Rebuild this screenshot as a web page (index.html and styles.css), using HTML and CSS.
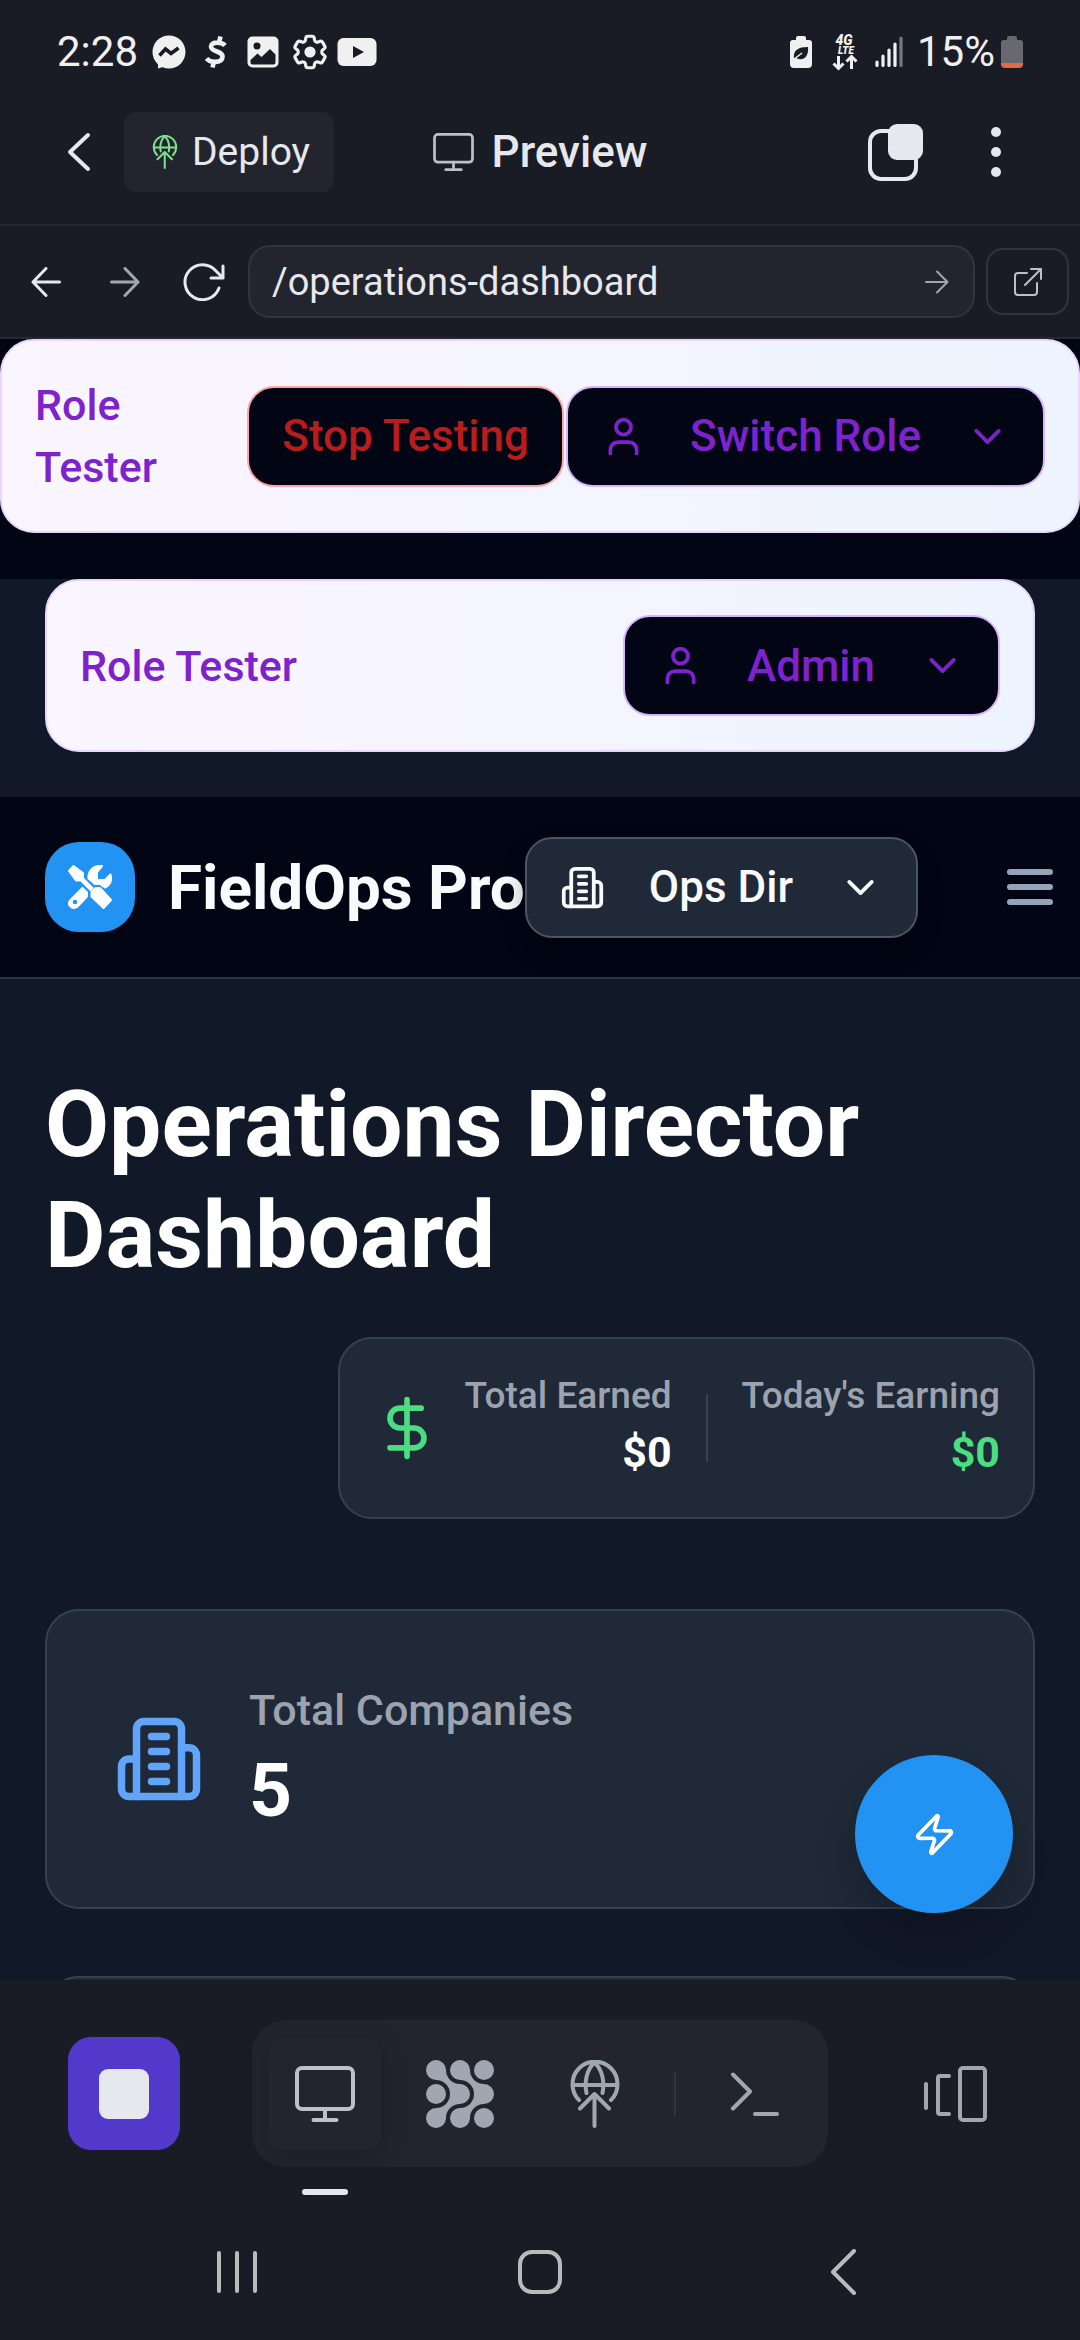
FILE: index.html
```html
<!DOCTYPE html>
<html lang="en">
<head>
<meta charset="utf-8">
<meta name="viewport" content="width=device-width, initial-scale=1">
<title>Preview</title>
<link rel="stylesheet" href="styles.css">
</head>
<body>
<svg class="sprite" aria-hidden="true">
  <symbol id="user" viewBox="0 0 24 24"><path d="M19 21v-2a4 4 0 0 0-4-4H9a4 4 0 0 0-4 4v2"/><circle cx="12" cy="7" r="4"/></symbol>
  <symbol id="chevron-down" viewBox="0 0 24 24"><path d="m6 9 6 6 6-6"/></symbol>
  <symbol id="building" viewBox="0 0 24 24"><path d="M6 22V4a2 2 0 0 1 2-2h8a2 2 0 0 1 2 2v18Z"/><path d="M6 12H4a2 2 0 0 0-2 2v6a2 2 0 0 0 2 2h2"/><path d="M18 9h2a2 2 0 0 1 2 2v9a2 2 0 0 1-2 2h-2"/><path d="M10 6h4M10 10h4M10 14h4M10 18h4"/></symbol>
  <symbol id="globe-up" viewBox="0 0 50 68"><path d="M9 40A22.500 22.500 0 1 1 41 40M3 25H47M24.500 2.500C17 9 14 22 16.500 33M24.500 2.500C32 9 35 22 32.500 33M24.500 34V66M10 48.500 24.500 34 39 48.500"/></symbol>
  <symbol id="monitor" viewBox="0 0 60 56"><rect x="2" y="2" width="56" height="41" rx="5"/><path d="M30 43V54M18.500 54H41.500"/></symbol>
</svg>

<header class="status">
  <div class="status-group">
    <span class="status-text status-time">2:28</span>
    <span class="tray">
      <svg width="34" height="34" viewBox="0 0 34 34" fill="#f0f0f0"><circle cx="17" cy="17" r="16.500"/><path d="M6 27V33.500L14 31Z"/><path d="M7.500 20.500 13.500 14 19 18.500 26.500 13" fill="none" stroke="#1a1c25" stroke-width="3.600"/></svg>
    </span>
    <span class="tray">
      <svg width="24" height="34" viewBox="0 0 24 34" fill="none" stroke="#f0f0f0" stroke-width="4.600"><path d="M21 10.500C18 7 8 6 7 11.500 6.500 17 19 15.500 18.500 22 18 28 7 28.500 2.500 23.500M15 7.500 16.500 1.500M8.500 32.500 10 26.500"/></svg>
    </span>
    <span class="tray">
      <svg width="32" height="32" viewBox="0 0 32 32"><rect x=".5" y=".5" width="31" height="31" rx="5" fill="#f0f0f0"/><circle cx="10" cy="10" r="3.500" fill="#1a1c25"/><path d="M3.500 24 10.500 17.500 14.500 21 23 13 28.500 18.500V26.500Q28.500 28.500 26.500 28.500H5.500Q3.500 28.500 3.500 26.500Z" fill="#1a1c25"/></svg>
    </span>
    <span class="tray">
      <svg width="42" height="42" viewBox="0 0 24 24" fill="none" stroke="#f0f0f0" stroke-width="1.800"><path d="M9.594 3.940c.09-.542.56-.94 1.110-.94h2.593c.55 0 1.020.398 1.110.94l.213 1.281c.063.374.313.686.645.87.074.04.147.083.22.127.325.196.72.257 1.075.124l1.217-.456a1.125 1.125 0 0 1 1.370.49l1.296 2.247a1.125 1.125 0 0 1-.26 1.431l-1.003.827c-.293.241-.438.613-.43.992a7.723 7.723 0 0 1 0 .255c-.008.378.137.75.43.991l1.004.827c.424.35.534.955.26 1.430l-1.298 2.247a1.125 1.125 0 0 1-1.369.491l-1.217-.456c-.355-.133-.75-.072-1.076.124a6.470 6.470 0 0 1-.22.128c-.331.183-.581.495-.644.869l-.213 1.281c-.09.543-.56.94-1.110.94h-2.594c-.55 0-1.019-.398-1.110-.94l-.213-1.281c-.062-.374-.312-.686-.644-.87a6.520 6.520 0 0 1-.22-.127c-.325-.196-.72-.257-1.076-.124l-1.217.456a1.125 1.125 0 0 1-1.369-.49l-1.297-2.247a1.125 1.125 0 0 1 .26-1.431l1.004-.827c.292-.24.437-.613.43-.991a6.932 6.932 0 0 1 0-.255c.007-.38-.138-.751-.43-.992l-1.004-.827a1.125 1.125 0 0 1-.26-1.430l1.297-2.247a1.125 1.125 0 0 1 1.370-.491l1.216.456c.356.133.751.072 1.076-.124.072-.044.146-.086.22-.128.332-.183.582-.495.644-.869l.214-1.280Z"/><circle cx="12" cy="12" r="3.200" fill="#f0f0f0" stroke="none"/></svg>
    </span>
    <span class="tray">
      <svg width="40" height="30" viewBox="0 0 40 30"><rect x=".5" y="1" width="39" height="28" rx="6" fill="#f0f0f0"/><path d="M16 9V21L27 15Z" fill="#1a1c25"/></svg>
    </span>
  </div>
  <div class="status-group status-right">
    <span class="meter">
      <svg width="22" height="32" viewBox="0 0 22 32"><path d="M6 4V2Q6 0 8 0H14Q16 0 16 2V4H19Q22 4 22 7V28Q22 32 18 32H4Q0 32 0 28V7Q0 4 3 4Z" fill="#f0f0f0"/><path d="M4 23C3 14 8 11 18 11 19 20 14 26 6 22L12 17" fill="#1a1c25"/><path d="M3 24 12 17" stroke="#f0f0f0" stroke-width="1.500"/></svg>
    </span>
    <span class="meter">
      <svg class="network" width="26" height="38" viewBox="0 0 26 38" fill="#f0f0f0"><text x="12" y="12" class="net net-large">4G</text><text x="14" y="21" class="net">LTE</text><path d="M6.500 23V35M1.500 30.500 6.500 35.500 11.500 30.500M19.500 36V24M14.500 28.500 19.500 23.500 24.500 28.500" fill="none" stroke="#f0f0f0" stroke-width="3"/></svg>
    </span>
    <span class="meter">
      <svg width="28" height="32" viewBox="0 0 28 32" fill="none" stroke="#f0f0f0" stroke-width="3.200" stroke-linecap="round"><path d="M2 26V29.500M8 20V29.500M14 14V29.500M20 8V29.500"/><path d="M26 2V29.500" stroke="#77787d"/></svg>
    </span>
    <span class="status-text">15%</span>
    <svg width="22" height="32" viewBox="0 0 22 32"><path d="M6 4V2Q6 0 8 0H14Q16 0 16 2V4H19Q22 4 22 7V27H0V7Q0 4 3 4Z" fill="#68696e"/><path d="M0 27H22V28Q22 32 18 32H4Q0 32 0 28Z" fill="#e06c47"/></svg>
  </div>
</header>

<div class="titlebar">
  <div class="titlebar-side">
    <button class="icon-button back" aria-label="Back"><svg width="24" height="40" viewBox="0 0 24 40" class="line" stroke-width="4"><path d="M21 3 3 20 21 37"/></svg></button>
    <button class="deploy"><svg class="line deploy-icon" width="34" height="34" stroke-width="4"><use href="#globe-up"/></svg>Deploy</button>
  </div>
  <h2 class="titlebar-name"><svg class="line soft" width="41" height="38" stroke-width="4"><use href="#monitor"/></svg>Preview</h2>
  <div class="titlebar-side titlebar-end">
    <button class="icon-button" aria-label="Tabs"><svg width="56" height="58" viewBox="0 0 56 58"><rect x="2" y="8" width="46" height="48" rx="11" fill="none" stroke="#e6e8ee" stroke-width="4"/><rect x="20" y="1" width="35" height="36" rx="9" fill="#e6e8ee"/></svg></button>
    <button class="icon-button" aria-label="More"><svg width="10" height="50" viewBox="0 0 10 50" fill="#e6e8ee"><circle cx="5" cy="5" r="5"/><circle cx="5" cy="25" r="5"/><circle cx="5" cy="45" r="5"/></svg></button>
  </div>
</div>

<nav class="toolbar">
  <button class="nav-button" aria-label="Go back"><svg class="line" width="30" height="30" viewBox="0 0 30 30" stroke-width="3"><path d="M28.500 15H2M15 1.500 2 15 15 28.500"/></svg></button>
  <button class="nav-button dim" aria-label="Go forward"><svg class="line" width="30" height="30" viewBox="0 0 30 30" stroke-width="3"><path d="M1.500 15H28M15 1.500 28 15 15 28.500"/></svg></button>
  <button class="nav-button" aria-label="Reload"><svg class="line" width="42" height="38" viewBox="0 0 42 38" stroke-width="3"><path d="M36 25A17.500 17.500 0 1 1 33 8L40 15M40 3V15H28"/></svg></button>
  <div class="address">
    <input class="address-input" type="text" value="/operations-dashboard" aria-label="Path">
    <svg class="line dim" width="24" height="24" viewBox="0 0 24 24" stroke-width="2"><path d="M1 12H22M12 1.500 22.500 12 12 22.500"/></svg>
  </div>
  <button class="open-button" aria-label="Open in new tab"><svg class="line soft" width="30" height="30" viewBox="0 0 30 30" stroke-width="2"><path d="M14 6H5Q2 6 2 9V25Q2 28 5 28H21Q24 28 24 25V16M18 2H28V12M28 2 12 18"/></svg></button>
</nav>

<div class="preview">
  <section class="tester tester-top">
    <span class="tester-name narrow">Role Tester</span>
    <div class="tester-actions">
      <button class="stop">Stop Testing</button>
      <label class="picker role">
        <svg class="line icon"><use href="#user"/></svg>
        <select class="picker-select" aria-label="Role"><option>Switch Role</option></select>
        <svg class="line icon"><use href="#chevron-down"/></svg>
      </label>
    </div>
  </section>

  <div class="tester-band">
    <section class="tester">
      <span class="tester-name">Role Tester</span>
      <label class="picker role">
        <svg class="line icon"><use href="#user"/></svg>
        <select class="picker-select" aria-label="Current role"><option>Admin</option></select>
        <svg class="line icon"><use href="#chevron-down"/></svg>
      </label>
    </section>
  </div>

  <header class="brandbar">
    <span class="logo"><svg width="44" height="44" viewBox="0 0 44 44" fill="#fff" stroke="#fff" stroke-width="2" stroke-linejoin="round"><path d="M5.500 1 15 8V13.500L24.500 23 22.500 25 13 15.500H8L1 6Z"/><path d="M23.500 27 27.500 23H32L43 35 35.500 43 23.500 31.500Z"/><path d="M34 1 29 7V15H37L42.500 9.500C44 15 42 20 37 22.500L32 19H27L20.500 13.500C20 5 26 0 34 1Z"/><path d="M14.500 23 19 27.500V31.500L9 42C4 45-1 40 2 35.500Z"/><circle cx="7" cy="37" r="1.200" fill="#2293f3" stroke="#2293f3"/></svg></span>
    <span class="brand">FieldOps Pro</span>
    <label class="picker org">
      <svg class="line icon"><use href="#building"/></svg>
      <select class="picker-select" aria-label="Workspace"><option>Ops Dir</option></select>
      <svg class="line icon"><use href="#chevron-down"/></svg>
    </label>
    <button class="menu" aria-label="Menu"><svg class="line" width="60" height="60" viewBox="0 0 24 24" stroke-width="2.400"><path d="M4 6H20M4 12H20M4 18H20"/></svg></button>
  </header>

  <main class="content">
    <h1 class="headline">Operations Director Dashboard</h1>

    <section class="earnings">
      <svg class="line dollar" width="68" height="68" viewBox="0 0 24 24"><path d="M12 2V22M17 5H9.500a3.500 3.500 0 0 0 0 7h5a3.500 3.500 0 0 1 0 7H6"/></svg>
      <div class="earned">
        <span class="earned-label">Total Earned</span>
        <span class="earned-value">$0</span>
      </div>
      <span class="earned-rule"></span>
      <div class="earned">
        <span class="earned-label">Today's Earning</span>
        <span class="earned-value green">$0</span>
      </div>
    </section>

    <section class="stat">
      <svg class="line stat-icon" width="90" height="90"><use href="#building"/></svg>
      <div class="stat-body">
        <span class="stat-label">Total Companies</span>
        <span class="stat-value">5</span>
      </div>
    </section>
    <section class="stat"></section>
  </main>

  <button class="fab" aria-label="Quick actions"><svg class="line" width="45" height="45" viewBox="0 0 24 24"><path d="M4 14a1 1 0 0 1-.78-1.630l9.900-10.200a.5.5 0 0 1 .86.46l-1.920 6.020A1 1 0 0 0 13 10h7a1 1 0 0 1 .78 1.630l-9.900 10.200a.5.5 0 0 1-.86-.46l1.920-6.020A1 1 0 0 0 11 14z"/></svg></button>
</div>

<div class="dock">
  <button class="stop-run" aria-label="Stop"><span class="stop-square"></span></button>
  <div class="tabs">
    <button class="tab active" aria-label="Preview tab"><svg class="line" width="60" height="56" stroke-width="4"><use href="#monitor"/></svg></button>
    <button class="tab" aria-label="Agent"><svg width="68" height="68" viewBox="0 0 68 68" fill="#a1a7b2"><path id="flow" d="M10 0A10 10 0 0 1 20 10A14 14 0 0 0 34 24A10 10 0 0 1 34 44A14 14 0 0 0 20 58A10 10 0 1 1 10 48A14 14 0 0 0 10 20A10 10 0 0 1 10 0Z"/><use href="#flow" x="24"/><circle cx="10" cy="34" r="10"/><circle cx="58" cy="10" r="10"/><circle cx="58" cy="58" r="10"/></svg></button>
    <button class="tab" aria-label="Deployments"><svg class="line" width="50" height="68" stroke-width="4"><use href="#globe-up"/></svg></button>
    <span class="tab-rule"></span>
    <button class="tab" aria-label="Console"><svg class="line" width="50" height="46" viewBox="0 0 50 46" stroke-width="4"><path d="M3 3.500 20 20.500 3 37.500M25 43H47"/></svg></button>
  </div>
  <button class="switcher" aria-label="All tabs"><svg class="line" width="64" height="56" viewBox="0 0 64 56" stroke-width="4"><path d="M2 18V42M25 10H16Q14 10 14 12V46Q14 48 16 48H25"/><rect x="36" y="2" width="25" height="52" rx="3"/></svg></button>
</div>

<footer class="system">
  <button class="system-button" aria-label="Recents"><svg class="line" width="42" height="44" viewBox="0 0 42 44" stroke-width="4"><path d="M3 3V41M21 3V41M39 3V41"/></svg></button>
  <button class="system-button" aria-label="Home"><svg class="line" width="44" height="44" viewBox="0 0 44 44" stroke-width="4"><rect x="2" y="2" width="40" height="40" rx="12"/></svg></button>
  <button class="system-button" aria-label="System back"><svg class="line" width="26" height="46" viewBox="0 0 26 46" stroke-width="4"><path d="M24 2 3 23 24 44"/></svg></button>
</footer>
</body>
</html>
```
FILE: styles.css
```css
* { box-sizing: border-box; }

body {
  margin: 0;
  height: 100vh;
  display: flex;
  flex-direction: column;
  overflow: hidden;
  background: #1a1c25;
  color: #e6e8ee;
  font-family: Roboto, "Liberation Sans", sans-serif;
  font-size: 43px;
}

button, input, select {
  margin: 0;
  padding: 0;
  border: 0;
  background: none;
  color: inherit;
  font: inherit;
}

button, label, select { cursor: pointer; }

svg { display: block; flex: none; }
.sprite { position: absolute; width: 0; height: 0; }

.line {
  fill: none;
  stroke: currentColor;
  stroke-linecap: round;
  stroke-linejoin: round;
}
.line:not([stroke-width]) { stroke-width: 2; }

.icon { width: 45px; height: 45px; }
.soft { color: #bcc0cb; }
.dim { color: #a1a7b2; }

/* Device status line */
.status {
  flex: none;
  height: 104px;
  padding: 0 57px;
  display: flex;
  align-items: center;
  justify-content: space-between;
  color: #f0f0f0;
}
.status-group { display: flex; align-items: center; gap: 7px; }
.status-time { margin-right: 4px; }
.status-right { gap: 12px; }
.status-right .status-text { margin-right: -6px; }
.status-text { font-size: 42px; line-height: 48px; }
.tray { width: 40px; display: flex; justify-content: center; }
.meter { width: 32px; display: flex; justify-content: center; }
.network { overflow: visible; }
.net { font-size: 10px; font-weight: 900; font-style: italic; text-anchor: middle; }
.net-large { font-size: 14px; }

/* App title row */
.titlebar {
  flex: none;
  display: grid;
  grid-template-columns: 1fr auto 1fr;
  align-items: center;
  padding: 8px 34px 32px;
  border-bottom: 2px solid #262831;
}
.titlebar-side { display: flex; align-items: center; }
.titlebar-end { justify-content: flex-end; }
.titlebar-name {
  margin: 0;
  display: flex;
  align-items: center;
  gap: 18px;
  font-size: 44px;
  font-weight: 500;
}
.icon-button {
  width: 100px;
  height: 80px;
  display: flex;
  align-items: center;
  justify-content: center;
}
.back { width: 90px; }
.deploy {
  height: 80px;
  padding: 0 24px;
  display: flex;
  align-items: center;
  gap: 10px;
  border-radius: 12px;
  background: #23252e;
  font-size: 39px;
}
.deploy-icon { color: #7ee08f; }

/* Address row */
.toolbar {
  flex: none;
  height: 113px;
  padding: 0 11px 0 6px;
  display: flex;
  align-items: center;
  border-bottom: 2px solid #262831;
}
.nav-button {
  width: 79px;
  height: 79px;
  display: flex;
  align-items: center;
  justify-content: center;
}
.address {
  flex: 1;
  height: 73px;
  margin: 0 11px 0 5px;
  padding: 0 24px 0 22px;
  display: flex;
  align-items: center;
  border: 2px solid #31333e;
  border-radius: 22px;
  background: #23252e;
}
.address-input { flex: 1; min-width: 0; outline: 0; font-size: 38px; }
.open-button {
  width: 83px;
  height: 67px;
  display: flex;
  align-items: center;
  justify-content: center;
  border: 2px solid #31333e;
  border-radius: 17px;
}

/* Previewed page */
.preview {
  flex: 1;
  min-height: 0;
  position: relative;
  overflow: hidden;
  background: #010514;
}

.tester {
  padding: 34px 33px;
  display: flex;
  align-items: center;
  justify-content: space-between;
  border: 2px solid #e9d5ff;
  border-radius: 34px;
  background: linear-gradient(to right, #faf5ff, #eef4ff);
  color: #7e22ce;
}
.tester-top { padding: 33px; margin-bottom: 46px; }
.tester-band { padding: 0 45px 45px; background: #111827; }
.tester-name { font-weight: 500; line-height: 62px; }
.narrow { width: min-content; }
.tester-actions { display: flex; gap: 2px; }

.stop, .picker {
  height: 101px;
  padding: 0 33px;
  display: flex;
  align-items: center;
  border: 2px solid #d8b4fe;
  border-radius: 27px;
  background: #010514;
  font-size: 44px;
  font-weight: 500;
}
.stop { border-color: #fca5a5; color: #b91c1c; }
.picker { gap: 44px; }
.picker-select { appearance: none; outline: 0; }
.picker-select option { color: #111827; }
.org {
  border-color: #4b5563;
  background: #1f2937;
  color: #f8fafc;
  box-shadow: 0 12px 24px rgba(0, 0, 0, .3);
}

.brandbar {
  height: 182px;
  padding: 0 20px 0 45px;
  display: flex;
  align-items: center;
  border-bottom: 2px solid #2b364a;
}
.logo {
  flex: none;
  width: 90px;
  height: 90px;
  display: flex;
  align-items: center;
  justify-content: center;
  border-radius: 34px;
  background: #2293f3;
}
.brand {
  margin-left: 33px;
  color: #f8fafc;
  font-size: 62px;
  font-weight: 700;
  white-space: nowrap;
}
.menu { margin-left: auto; color: #94a3b8; }

.content {
  padding: 90px 45px 0;
  display: flex;
  flex-direction: column;
  background: #111827;
}
.headline {
  margin: 0 0 46px;
  color: #fff;
  font-size: 93px;
  font-weight: 700;
  line-height: 111px;
}

.earnings, .stat {
  display: flex;
  align-items: center;
  border: 2px solid #374151;
  border-radius: 34px;
  background: #1f2937;
}
.earnings { align-self: flex-end; margin-bottom: 90px; padding: 33px; }
.dollar { margin-right: 23px; color: #4ade80; }
.earned { display: flex; flex-direction: column; align-items: flex-end; }
.earned-label { color: #9ca3af; font-size: 37px; font-weight: 500; line-height: 48px; }
.earned-value { color: #fff; font-weight: 700; line-height: 64px; }
.earned-rule { width: 2px; height: 68px; margin: 0 34px; background: #374151; }
.earned .green { color: #4ade80; }

.stat { min-height: 300px; margin-bottom: 67px; padding: 67px; gap: 45px; }
.stat-icon { color: #60a5fa; }
.stat-body { display: flex; flex-direction: column; }
.stat-label { color: #9ca3af; font-weight: 500; line-height: 62px; }
.stat-value { color: #fff; font-size: 75px; font-weight: 700; line-height: 98px; }

.fab {
  position: absolute;
  right: 67px;
  bottom: 67px;
  width: 158px;
  height: 158px;
  display: flex;
  align-items: center;
  justify-content: center;
  border-radius: 50%;
  background: #2293f3;
  color: #fff;
  box-shadow: 0 24px 36px rgba(0, 0, 0, .2);
}

/* Bottom dock */
.dock {
  flex: none;
  padding: 40px 68px 37px;
  display: flex;
  align-items: center;
  justify-content: space-between;
  color: #a1a7b2;
}
.stop-run, .tab, .switcher {
  width: 112px;
  height: 113px;
  display: flex;
  align-items: center;
  justify-content: center;
}
.stop-run { border-radius: 23px; background: #5238cb; }
.stop-square { width: 50px; height: 50px; border-radius: 9px; background: #e6e8ee; }
.tabs {
  padding: 17px;
  display: flex;
  align-items: center;
  gap: 23px;
  border-radius: 34px;
  background: #23252e;
}
.active {
  position: relative;
  border-radius: 14px;
  background: #23252e;
  color: #bcc0cb;
  box-shadow: 0 8px 24px rgba(20, 16, 26, .35);
}
.active::after {
  content: "";
  position: absolute;
  left: 33px;
  bottom: -45px;
  width: 46px;
  height: 6px;
  border-radius: 3px;
  background: #e6e8ee;
}
.tab-rule { width: 2px; height: 45px; background: #31333e; }

/* System navigation */
.system {
  flex: none;
  height: 136px;
  padding: 0 85px;
  display: flex;
  color: #bbb;
}
.system-button { flex: 1; display: flex; align-items: center; justify-content: center; }
```
